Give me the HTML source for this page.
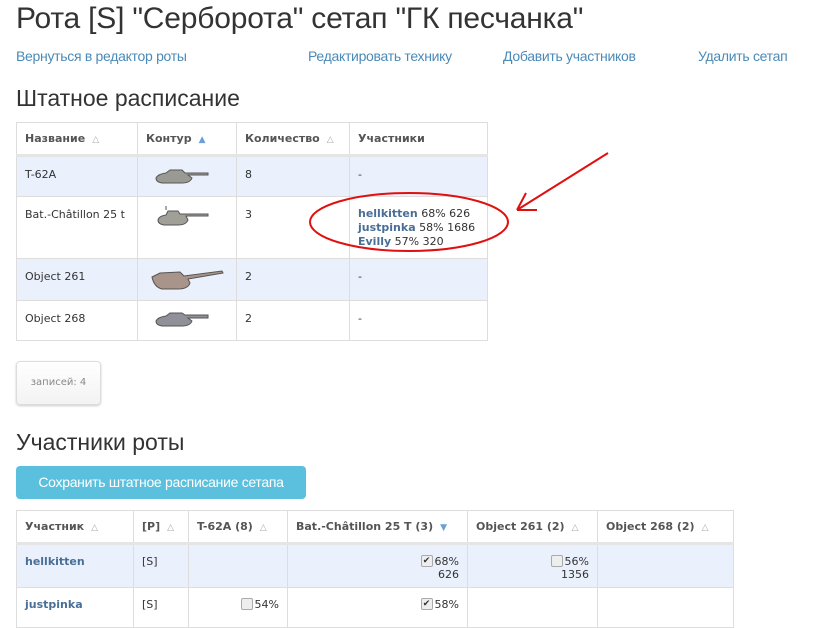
<!DOCTYPE html>
<html><head><meta charset="utf-8"><style>
body{margin:0;width:822px;height:610px;overflow:hidden;background:#fff;font-family:"Liberation Sans",sans-serif;color:#333;position:relative}
.a{position:absolute;white-space:nowrap}
h1{position:absolute;left:16px;top:2px;margin:0;font-weight:normal;font-size:30px;letter-spacing:-0.2px;color:#333}
.l{color:#4a8ab8;font-size:14px;letter-spacing:-0.3px}
h2{position:absolute;left:16px;margin:0;font-weight:normal;font-size:23px;color:#333}
.t{position:absolute;border-collapse:collapse;font-family:"DejaVu Sans",sans-serif;font-size:11px;color:#333}
.t td,.t th{border:1px solid #ddd;padding:0 8px;text-align:left;vertical-align:top}
.t th{font-weight:bold;color:#555;vertical-align:middle;border-bottom:3px solid #e5e5e5;background:#fff}
.odd td{background:#eaf1fd}
.s{color:#aaa;font-size:9px;margin-left:7px;font-weight:normal}
.sb{color:#6a9fd8;font-size:9px;margin-left:7px}
.n{color:#4a6f96;font-weight:bold}
.cb{display:inline-block;width:10px;height:10px;border:1px solid #aaa;border-radius:2px;background:#eee;font-size:9px;line-height:10px;text-align:center;vertical-align:top;margin-right:2px}
</style></head><body>
<h1>Рота [S] "Серборота" сетап "ГК песчанка"</h1>
<div class="a l" style="left:16px;top:48px">Вернуться в редактор роты</div>
<div class="a l" style="left:308px;top:48px">Редактировать технику</div>
<div class="a l" style="left:503px;top:48px">Добавить участников</div>
<div class="a l" style="left:698px;top:48px">Удалить сетап</div>
<h2 style="top:85px">Штатное расписание</h2>

<table class="t" style="left:16px;top:122px;width:472px">
<tr style="height:33px"><th style="width:104px">Название<span class="s">△</span></th><th style="width:80px">Контур<span class="sb">▲</span></th><th style="width:96px">Количество<span class="s">△</span></th><th>Участники</th></tr>
<tr class="odd" style="height:41px"><td style="padding-top:11px">T-62A</td><td style="padding-top:9px;padding-left:14px"><svg width="60" height="20"><path d="M4 12 Q6 8 14 7 L18 4 L30 4 L33 7 L56 7 L56 9 L36 9 L40 12 Q38 17 30 17 L10 17 Q4 16 4 12Z" fill="#9a9a94" stroke="#555" stroke-width="1"/></svg></td><td style="padding-top:11px">8</td><td style="padding-top:11px">-</td></tr>
<tr style="height:62px"><td style="padding-top:11px">Bat.-Châtillon 25 t</td><td style="padding-top:7px;padding-left:14px"><svg width="60" height="26"><path d="M6 16 Q7 12 14 11 L16 7 L26 7 L28 10 L56 10 L56 12 L34 12 L36 16 Q34 21 26 21 L12 21 Q6 20 6 16Z" fill="#a0a098" stroke="#555" stroke-width="1"/><path d="M14 6 L14 2" stroke="#555"/></svg></td><td style="padding-top:11px">3</td><td style="padding-top:10px;line-height:14px"><span class="n">hellkitten</span> 68% 626<br><span class="n">justpinka</span> 58% 1686<br><span class="n">Evilly</span> 57% 320</td></tr>
<tr class="odd" style="height:42px"><td style="padding-top:11px">Object 261</td><td style="padding-top:4px;padding-left:10px"><svg width="80" height="32"><path d="M4 14 L12 10 L32 9 L36 13 L74 8 L75 10 L40 16 L42 20 Q40 26 30 26 L14 26 Q6 24 4 14Z" fill="#a89488" stroke="#555" stroke-width="1"/></svg></td><td style="padding-top:11px">2</td><td style="padding-top:11px">-</td></tr>
<tr style="height:40px"><td style="padding-top:11px">Object 268</td><td style="padding-top:8px;padding-left:14px"><svg width="60" height="20"><path d="M4 12 Q6 8 14 7 L18 4 L30 4 L33 6 L56 6 L56 9 L36 9 L40 12 Q38 17 30 17 L10 17 Q4 16 4 12Z" fill="#909098" stroke="#555" stroke-width="1"/></svg></td><td style="padding-top:11px">2</td><td style="padding-top:11px">-</td></tr>
</table>

<div class="a" style="left:16px;top:361px;width:83px;height:42px;border:1px solid #ddd;border-radius:4px;box-shadow:0 1px 2px #ccc;background:linear-gradient(#fff,#f3f3f3);font-family:'DejaVu Sans',sans-serif;font-size:10px;color:#888;line-height:42px;text-align:center">записей: 4</div>

<h2 style="top:429px">Участники роты</h2>
<div class="a" style="left:16px;top:466px;width:290px;height:33px;background:#5bc0de;border-radius:4px;color:#fff;font-size:14px;line-height:33px;text-align:center;letter-spacing:-0.3px">Сохранить штатное расписание сетапа</div>

<table class="t" style="left:16px;top:510px;width:718px">
<tr style="height:33px"><th style="width:100px">Участник<span class="s">△</span></th><th style="width:38px">[P]<span class="s">△</span></th><th style="width:82px">T-62A (8)<span class="s">△</span></th><th style="width:163px">Bat.-Châtillon 25 T (3)<span class="sb">▼</span></th><th style="width:113px">Object 261 (2)<span class="s">△</span></th><th>Object 268 (2)<span class="s">△</span></th></tr>
<tr class="odd" style="height:44px"><td style="padding-top:10px" class="n">hellkitten</td><td style="padding-top:10px">[S]</td><td></td><td style="text-align:right;padding-top:10px"><span class="cb">✔</span>68%<br>626</td><td style="text-align:right;padding-top:10px"><span class="cb"></span>56%<br>1356</td><td></td></tr>
<tr style="height:40px"><td style="padding-top:10px" class="n">justpinka</td><td style="padding-top:10px">[S]</td><td style="text-align:right;padding-top:10px"><span class="cb"></span>54%</td><td style="text-align:right;padding-top:10px"><span class="cb">✔</span>58%</td><td></td><td></td></tr>
</table>

<svg class="a" style="left:0;top:0" width="822" height="610">
<ellipse cx="409" cy="222" rx="99" ry="29" fill="none" stroke="#e01010" stroke-width="2"/>
<path d="M608 153 L517 210 M517 210 L526 193 M517 210 L537 210" fill="none" stroke="#e01010" stroke-width="2"/>
</svg>
</body></html>
